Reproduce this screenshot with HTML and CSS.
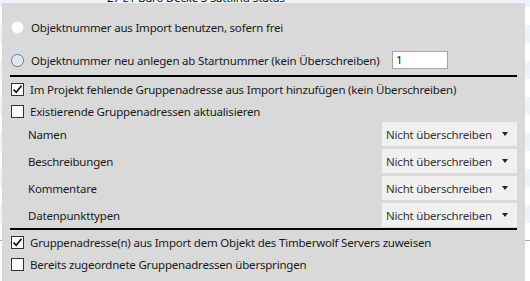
FILE: index.html
```html
<!DOCTYPE html>
<html>
<head>
<meta charset="utf-8">
<link rel="stylesheet" href="styles.css">
</head>
<body>
<div class="bg">
  <div class="bg-row alt"><span class="bg-text">27 E1 Büro Decke 3 Sattlind Status</span></div>
  <div class="bg-row"></div>
  <div class="bg-row alt"></div>
  <div class="bg-row"></div>
  <div class="bg-row alt"></div>
  <div class="bg-row"></div>
  <div class="bg-row alt"></div>
  <div class="bg-row"></div>
  <div class="bg-row alt"></div>
  <div class="bg-row"></div>
  <div class="bg-row alt"></div>
  <div class="bg-row"></div>
  <div class="bg-row alt"></div>
  <div class="bg-row line"></div>
  <div class="bg-row"></div>
  <div class="bg-row"></div>
</div>

<div class="panel">
  <div class="row radio-row first">
    <span class="radio"></span>
    <span class="label">Objektnummer aus Import benutzen, sofern frei</span>
  </div>
  <div class="row radio-row second">
    <span class="radio active"></span>
    <span class="label">Objektnummer neu anlegen ab Startnummer (kein Überschreiben)</span>
    <span class="input">1</span>
  </div>
  <div class="sep"></div>
  <div class="row check-row">
    <span class="check checked"><svg viewBox="0 0 11 11" width="11" height="11"><path d="M1.6 5.6 L4.2 8.3 L9.5 1.8" fill="none" stroke="#111" stroke-width="1.7"/></svg></span>
    <span class="label">Im Projekt fehlende Gruppenadresse aus Import hinzufügen (kein Überschreiben)</span>
  </div>
  <div class="row check-row">
    <span class="check"></span>
    <span class="label">Existierende Gruppenadressen aktualisieren</span>
  </div>
  <div class="subs">
    <div class="sub-row"><span class="sub-label">Namen</span><span class="select">Nicht überschreiben<span class="arrow"></span></span></div>
    <div class="sub-row"><span class="sub-label">Beschreibungen</span><span class="select">Nicht überschreiben<span class="arrow"></span></span></div>
    <div class="sub-row"><span class="sub-label">Kommentare</span><span class="select">Nicht überschreiben<span class="arrow"></span></span></div>
    <div class="sub-row"><span class="sub-label">Datenpunkttypen</span><span class="select">Nicht überschreiben<span class="arrow"></span></span></div>
  </div>
  <div class="sep sep2"></div>
  <div class="row check-row">
    <span class="check checked"><svg viewBox="0 0 11 11" width="11" height="11"><path d="M1.6 5.6 L4.2 8.3 L9.5 1.8" fill="none" stroke="#111" stroke-width="1.7"/></svg></span>
    <span class="label">Gruppenadresse(n) aus Import dem Objekt des Timberwolf Servers zuweisen</span>
  </div>
  <div class="row check-row">
    <span class="check"></span>
    <span class="label">Bereits zugeordnete Gruppenadressen überspringen</span>
  </div>
</div>
</body>
</html>
```
FILE: styles.css
```css
html, body {
  margin: 0;
  padding: 0;
  width: 530px;
  height: 281px;
  overflow: hidden;
  background: #ffffff;
  font-family: "Noto Sans", "Open Sans", sans-serif;
  font-size: 11.5px;
  letter-spacing: -0.2px;
  color: #1a1a1a;
}

.bg {
  display: flex;
  flex-direction: column;
  margin-top: -11px;
}

.bg-row {
  height: 18px;
  flex: none;
  background: #ffffff;
}

.bg-row.alt {
  background: #eef3f9;
}

.bg-row.line {
  border-bottom: 1px solid #a8a8a8;
  height: 17px;
}

.bg-text {
  display: block;
  padding-left: 107px;
  line-height: 18px;
  font-size: 11.5px;
  color: #111;
}

.panel {
  position: absolute;
  left: 2px;
  top: 3px;
  width: 523px;
  height: 278px;
  background: #d9d9d9;
  display: flex;
  flex-direction: column;
  padding: 13px 8px 0 8px;
  box-sizing: border-box;
}

.row {
  display: flex;
  align-items: center;
  height: 22px;
  flex: none;
  white-space: nowrap;
}

.label {
  flex: none;
  white-space: nowrap;
}

.radio-row.second {
  margin-top: 11px;
}

.radio {
  width: 13px;
  height: 13px;
  box-sizing: border-box;
  border-radius: 50%;
  background: #ffffff;
  border: 1px solid #e6e6e6;
  margin-left: 1px;
  margin-right: 7px;
  flex: none;
}

.radio.active {
  border: 1px solid #56789e;
  background: #dfe6ee;
  box-shadow: inset 0 0 0 1px #eef2f6;
}

.input {
  margin-left: auto;
  margin-right: 69px;
  width: 56px;
  height: 18px;
  box-sizing: border-box;
  background: #ffffff;
  border: 1px solid #a6a6a6;
  padding-left: 3px;
  line-height: 16px;
  flex: none;
}

.sep {
  height: 2px;
  background: #000000;
  width: 507px;
  margin-top: 4px;
  flex: none;
}

.sep2 {
  margin-top: 1px;
}

.sep + .check-row {
  margin-top: 1px;
}

.check {
  width: 13px;
  height: 13px;
  box-sizing: border-box;
  border: 1px solid #333333;
  background: #ffffff;
  margin-left: 1px;
  margin-right: 6px;
  flex: none;
  display: flex;
  align-items: center;
  justify-content: center;
}

.subs {
  display: flex;
  flex-direction: column;
  gap: 3px;
  margin-top: 0;
  width: 507px;
}

.sub-row {
  display: flex;
  align-items: center;
  height: 24px;
  flex: none;
  white-space: nowrap;
}

.sub-label {
  padding-left: 18px;
}

.select {
  margin-left: auto;
  width: 135px;
  height: 24px;
  box-sizing: border-box;
  background: #f0f0f0;
  padding-left: 4px;
  display: flex;
  align-items: center;
  color: #333333;
}

.arrow {
  margin-left: auto;
  margin-right: 9px;
  width: 0;
  height: 0;
  border-left: 3.5px solid transparent;
  border-right: 3.5px solid transparent;
  border-top: 4px solid #222;
}
```
